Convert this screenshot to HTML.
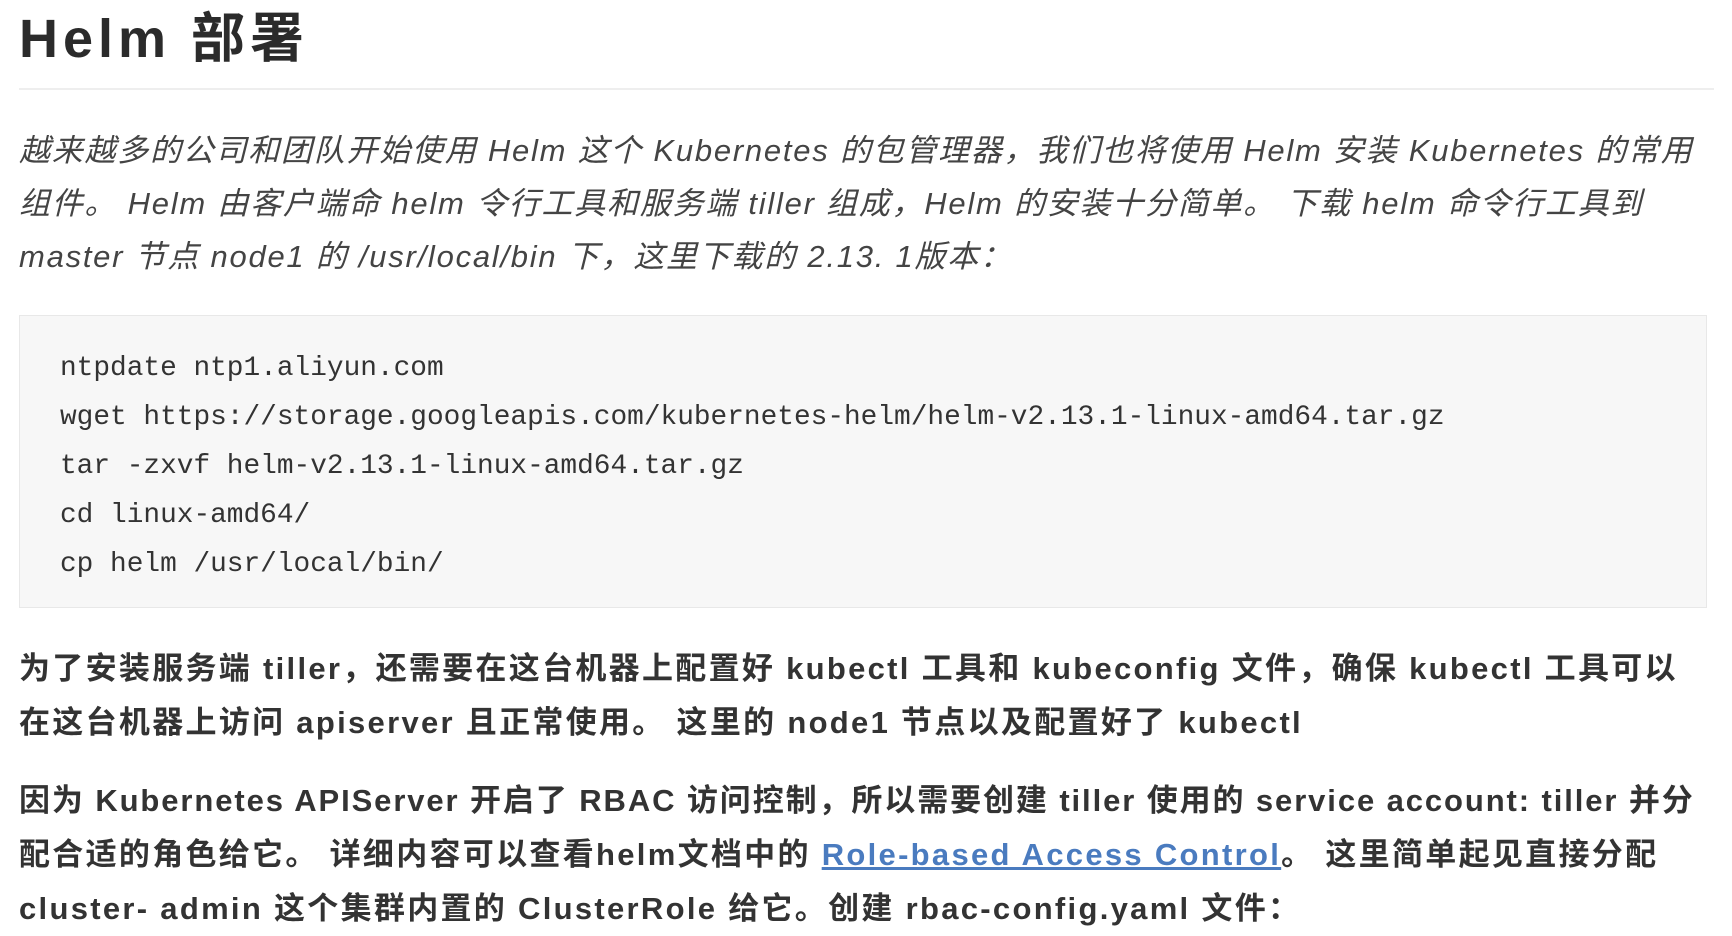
<!DOCTYPE html>
<html><head><meta charset="utf-8"><style>
body{margin:0;background:#fff;width:1732px;height:926px;overflow:hidden;font-family:"Liberation Sans","Noto Sans CJK SC",sans-serif;color:#333;}
h1{position:absolute;left:19px;top:6px;margin:0;font-size:54px;letter-spacing:5px;font-weight:bold;line-height:66px;color:#2b2b2b;}
.hr{position:absolute;left:19px;top:88px;width:1695px;height:2px;background:#eee;}
.p{position:absolute;left:19px;white-space:nowrap;font-size:31px;}
.it{font-style:italic;color:#444;top:124px;line-height:53px;letter-spacing:1.75px;}
.code{position:absolute;left:19px;top:315px;width:1688px;height:293px;background:#f7f7f7;border:1px solid #e8e8e8;box-sizing:border-box;}
.code pre{margin:0;position:absolute;left:40px;top:28px;font-family:"Liberation Mono",monospace;font-size:27.8px;line-height:49px;color:#333;}
.b{font-weight:bold;line-height:54px;color:#333;letter-spacing:2.3px;}
a{color:#4a7bbf;text-decoration:underline;}
</style></head><body>
<h1>Helm 部署</h1>
<div class="hr"></div>
<div class="p it">越来越多的公司和团队开始使用 Helm 这个 Kubernetes 的包管理器，我们也将使用 Helm 安装 Kubernetes 的常用<br>组件。 Helm 由客户端命 helm 令行工具和服务端 tiller 组成，Helm 的安装十分简单。 下载 helm 命令行工具到<br>master 节点 node1 的 /usr/local/bin 下，这里下载的 2.13. 1版本：</div>
<div class="code"><pre>ntpdate ntp1.aliyun.com
wget https://storage.googleapis.com/kubernetes-helm/helm-v2.13.1-linux-amd64.tar.gz
tar -zxvf helm-v2.13.1-linux-amd64.tar.gz
cd linux-amd64/
cp helm /usr/local/bin/</pre></div>
<div class="p b" style="top:642px">为了安装服务端 tiller，还需要在这台机器上配置好 kubectl 工具和 kubeconfig 文件，确保 kubectl 工具可以<br>在这台机器上访问 apiserver 且正常使用。 这里的 node1 节点以及配置好了 kubectl</div>
<div class="p b" style="top:774px"><span style="letter-spacing:1.9px">因为 Kubernetes APIServer 开启了 RBAC 访问控制，所以需要创建 tiller 使用的 service account: tiller 并分</span><br>配合适的角色给它。 详细内容可以查看helm文档中的 <a>Role-based Access Control</a>。 这里简单起见直接分配<br>cluster- admin 这个集群内置的 ClusterRole 给它。创建 rbac-config.yaml 文件：</div>
</body></html>
